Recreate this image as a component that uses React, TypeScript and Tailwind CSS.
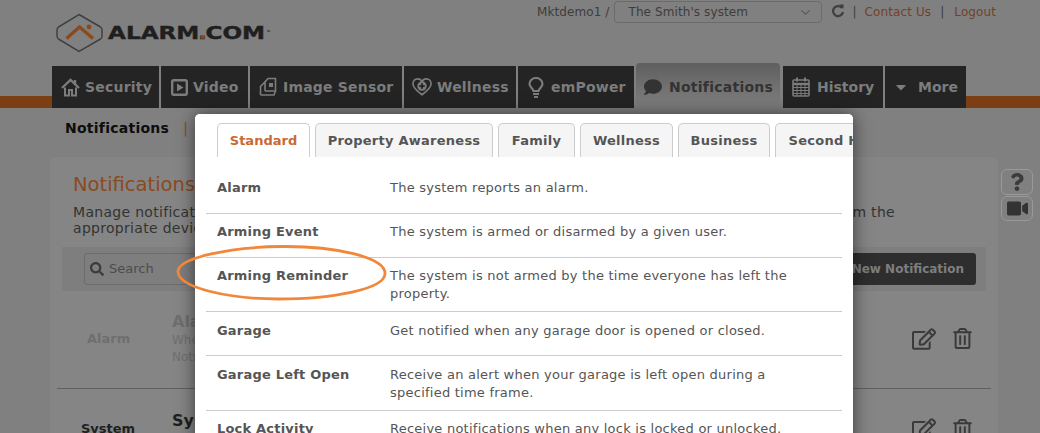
import React from 'react';
import {
  FaCaretDown,
  FaComment,
  FaQuestion,
  FaRegEdit,
  FaRegTrashAlt,
  FaSearch,
  FaVideo,
} from 'react-icons/fa';
import { FiChevronDown } from 'react-icons/fi';

const font = 'font-["DejaVu_Sans",Verdana,sans-serif]';

function Logo() {
  return (
    <div className="flex items-center pl-[56px] pt-[13px]">
      <svg width="48" height="40" viewBox="0 0 48 40" fill="none">
        <path d="M23 1.5 L44.5 14 Q46 15 46 17 L46 23 Q46 25 44.5 26 L23 38.5 L2.5 26 Q1 25 1 23 L1 17 Q1 15 2.5 14 Z" stroke="#404040" strokeWidth="1.5" />
        <path d="M10.5 25.5 L23.5 14 L37 25.5" stroke="#8a4a1c" strokeWidth="3.4" />
        <circle cx="33" cy="14" r="2.4" fill="#8a4a1c" />
      </svg>
      <span className="ml-[4px] origin-left scale-x-[1.36] text-[17px] leading-none font-bold text-[#1f1f1f] [-webkit-text-stroke:0.4px_#1f1f1f]">
        ALARM<span className="-mx-[1px] text-[#8a4a1c]">.</span>COM
        <span className="relative -top-[7px] ml-[1px] text-[3px] [-webkit-text-stroke:0px]">®</span>
      </span>
    </div>
  );
}

function UserBar() {
  return (
    <div className="flex h-[24px] items-center pr-[44px] text-[12px] tracking-[0.1px] text-[#3d3d3d]">
      <span>Mktdemo1 /</span>
      <div className="ml-[5px] flex h-[22px] w-[208px] items-center justify-between rounded-[4px] border border-[#6b6b6b] pl-[13px] pr-[8px]">
        <span>The Smith's system</span>
        <FiChevronDown size={15} className="text-[#5a5a5a]" />
      </div>
      <svg width="14" height="18" viewBox="0 0 14 18" fill="none" className="ml-[9px]">
        <path d="M11 5 A5 5 0 1 0 12 9" stroke="#3f3f3f" strokeWidth="2.2" />
        <path d="M8 1.5 L12.5 1.5 L12.5 6 Z" fill="#3f3f3f" />
      </svg>
      <span className="ml-[7px]">|</span>
      <span className="ml-[8px] text-[#74402a]">Contact Us</span>
      <span className="ml-[9px]">|</span>
      <span className="ml-[10px] text-[#74402a]">Logout</span>
    </div>
  );
}

function HomeIcon() {
  return (
    <svg width="19" height="19" viewBox="0 0 19 19" fill="none" stroke="#7c7c7c">
      <path d="M1 10 L9.5 2 L18 10" strokeWidth="2.4" />
      <path d="M14 2 L14 6" strokeWidth="2.4" />
      <path d="M4 9.5 L4 17.5 L8 17.5 L8 12 L11 12 L11 17.5 L15 17.5 L15 9.5" strokeWidth="2" />
    </svg>
  );
}

function PlayIcon() {
  return (
    <svg width="17" height="17" viewBox="0 0 17 17" fill="none">
      <rect x="1.2" y="1.2" width="14.6" height="14.6" rx="1.5" stroke="#7c7c7c" strokeWidth="2.4" />
      <path d="M6 4.5 L12.5 8.5 L6 12.5 Z" fill="#7c7c7c" />
    </svg>
  );
}

function SensorIcon() {
  return (
    <svg width="18" height="20" viewBox="0 0 18 20" fill="none" stroke="#7c7c7c" strokeWidth="1.6">
      <path d="M1.5 18 L1.5 9.5 L6 5 L6 14" />
      <path d="M6 5 L9 1.5 L16.5 1.5 L16.5 14 L6 14" />
      <path d="M1.5 18 L15 18 L16.5 14" />
      <rect x="10" y="6" width="4" height="4" fill="#7c7c7c" stroke="none" />
    </svg>
  );
}

function HeartIcon() {
  return (
    <svg width="22" height="20" viewBox="0 0 22 20" fill="none">
      <path d="M11 18.5 C4 13.5 1 10.5 1 6.5 C1 3.2 3.4 1 6.2 1 C8.2 1 10 2 11 4 C12 2 13.8 1 15.8 1 C18.6 1 21 3.2 21 6.5 C21 10.5 18 13.5 11 18.5 Z" stroke="#7c7c7c" strokeWidth="1.8" />
      <circle cx="11" cy="9" r="5.2" fill="#7c7c7c" />
      <path d="M11 6 L11 12 M8 9 L14 9" stroke="#242424" strokeWidth="2" />
    </svg>
  );
}

function BulbIcon() {
  return (
    <svg width="16" height="21" viewBox="0 0 16 21" fill="none" stroke="#7c7c7c">
      <path d="M5.5 14 C5 11 1.5 10 1.5 7 A6.5 6 0 0 1 14.5 7 C14.5 10 11 11 10.5 14 Z" strokeWidth="2.2" />
      <path d="M5 17 L11 17 M6 20 L10 20" strokeWidth="2" />
    </svg>
  );
}

function CalendarIcon() {
  return (
    <svg width="18" height="20" viewBox="0 0 18 20" fill="none" stroke="#7c7c7c">
      <rect x="1" y="3" width="16" height="16" rx="1" strokeWidth="1.6" />
      <path d="M1 7 L17 7" strokeWidth="2.4" />
      <path d="M1 10.5 L17 10.5 M1 13.5 L17 13.5 M1 16.5 L17 16.5 M5 8 L5 19 M9 8 L9 19 M13 8 L13 19" strokeWidth="1" />
      <path d="M5 0.5 L5 4.5 M13 0.5 L13 4.5" strokeWidth="2" />
    </svg>
  );
}

const navItems = [
  { label: 'Security', width: 'w-[107px]', icon: <HomeIcon />, gap: 'gap-[5px]' },
  { label: 'Video', width: 'w-[87px]', icon: <PlayIcon />, gap: 'gap-[4px]' },
  { label: 'Image Sensor', width: 'w-[152px]', icon: <SensorIcon />, gap: 'gap-[5px]' },
  { label: 'Wellness', width: 'w-[112px]', icon: <HeartIcon />, gap: 'gap-[5px]' },
  { label: 'emPower', width: 'w-[116px]', icon: <BulbIcon />, gap: 'gap-[5px]' },
];

function Nav() {
  return (
    <div className="flex h-[45px] items-end">
      <div className="h-[12px] w-[52px] self-end bg-[#7c3f14]" />
      <div className="flex items-end gap-[2px]">
        {navItems.map((item) => (
          <div key={item.label} className={`flex h-[42px] ${item.width} items-center ${item.gap} bg-[#242424] pl-[8px] text-[14px] font-bold tracking-[0.2px] text-[#7c7c7c]`}>
            <span className="flex w-[20px] shrink-0 justify-center">{item.icon}</span>
            <span>{item.label}</span>
          </div>
        ))}
        <div className="flex h-[45px] w-[144px] items-center gap-[7px] rounded-t-[4px] bg-gradient-to-b from-[#5f5f5f] to-[#808080] pl-[8px] pt-[3px] text-[14px] font-bold tracking-[0.25px] text-[#333333]">
          <FaComment size={18} />
          <span>Notifications</span>
        </div>
        <div className="ml-[1px] flex h-[42px] w-[100px] items-center gap-[7px] bg-[#242424] pl-[9px] text-[14px] font-bold text-[#7c7c7c]">
          <CalendarIcon />
          <span>History</span>
        </div>
        <div className="flex h-[42px] w-[81px] items-center gap-[9px] bg-[#242424] pl-[8px] text-[14px] font-bold text-[#7c7c7c]">
          <FaCaretDown size={16} />
          <span>More</span>
        </div>
      </div>
      <div className="h-[12px] flex-1 self-end bg-[#7c3f14]" />
    </div>
  );
}

function RowActions() {
  return (
    <div className="flex items-center gap-[16px] text-[#3a3a3a]">
      <FaRegEdit size={24} />
      <FaRegTrashAlt size={21} />
    </div>
  );
}

function Card() {
  return (
    <div className="flex items-start gap-[3px] pl-[50px] pt-[20px]">
      <div className="h-[300px] w-[948px] rounded-t-[6px] bg-[#858585] px-[7px]">
        <div className="pl-[16px] pt-[15px] text-[#8a4a22]">
          <div className="text-[19.5px] leading-[26px]">Notifications</div>
        </div>
        <div className="pl-[16px] pt-[6px] text-[14px] leading-[16px] tracking-[0.3px] text-[#333333]">
          <div className="flex w-[822px] justify-between">
            <span>Manage notifications for your system</span>
            <span>from the</span>
          </div>
          <div>appropriate devices.</div>
        </div>
        <div className="mx-[5px] mt-[11px] flex h-[44px] items-center justify-between bg-[#7e7e7e] pl-[22px] pr-[10px]">
          <div className="flex h-[32px] w-[200px] items-center gap-[5px] rounded-[3px] border border-[#6b6b6b] pl-[5px] text-[13px] text-[#4d4d4d]">
            <FaSearch size={14} className="text-[#3c3c3c]" />
            <span>Search</span>
          </div>
          <div className="flex h-[32px] items-center rounded-[3px] bg-[#2e2e2e] px-[12px] text-[12px] font-bold text-[#7e7e7e]">
            Add New Notification
          </div>
        </div>
        <div className="flex h-[98px] items-center border-b border-[#5f5f5f] pb-[2px] pl-[30px] pr-[18px]">
          <span className="w-[85px] text-[13px] font-bold text-[#6f6f6f]">Alarm</span>
          <div className="flex-1 text-[#6f6f6f]">
            <div className="text-[16px] font-bold leading-[20px]">Alarm</div>
            <div className="text-[12px] leading-[17px]">When an alarm occurs</div>
            <div className="text-[12px] leading-[17px]">Notify everyone</div>
          </div>
          <RowActions />
        </div>
        <div className="flex pl-[24px] pr-[18px] pt-[20px]">
          <span className="mt-[10px] w-[91px] text-[13px] font-bold text-[#1f1f1f]">System</span>
          <div className="flex-1 text-[16px] font-bold text-[#1f1f1f]">System</div>
          <div className="mt-[8px]"><RowActions /></div>
        </div>
      </div>
      <div className="mt-[12px] flex flex-col gap-[1px]">
        <div className="flex h-[26px] w-[32px] items-center justify-center rounded-[6px] border border-[#999999]">
          <FaQuestion size={18} className="text-[#3c3c3c]" />
        </div>
        <div className="flex h-[25px] w-[32px] items-center justify-center rounded-[6px] border border-[#999999]">
          <FaVideo size={21} className="text-[#333333]" />
        </div>
      </div>
    </div>
  );
}

const modalTabs = [
  { label: 'Property Awareness', width: 'w-[178px]' },
  { label: 'Family', width: 'w-[77px]' },
  { label: 'Wellness', width: 'w-[93px]' },
  { label: 'Business', width: 'w-[92px]' },
  { label: 'Second Home', width: 'w-[130px]' },
];

const rows = [
  { label: 'Alarm', text: 'The system reports an alarm.', pad: 'pt-[9px] pb-[8px]' },
  { label: 'Arming Event', text: 'The system is armed or disarmed by a given user.', pad: 'pt-[9px] pb-[8px]' },
  { label: 'Arming Reminder', text: 'The system is not armed by the time everyone has left the property.', pad: 'pt-[9px] pb-[8px]' },
  { label: 'Garage', text: 'Get notified when any garage door is opened or closed.', pad: 'pt-[10px] pb-[7px]' },
  { label: 'Garage Left Open', text: 'Receive an alert when your garage is left open during a specified time frame.', pad: 'pt-[10px] pb-[8px]' },
  { label: 'Lock Activity', text: 'Receive notifications when any lock is locked or unlocked.', pad: 'pt-[9px] pb-[8px]' },
];

function Modal() {
  return (
    <div className="absolute left-[195px] top-[114px] h-[340px] w-[658px] overflow-hidden rounded-[5px] bg-white shadow-[0_0_18px_rgba(0,0,0,0.55)]">
      <div className="flex h-[43px] items-end gap-[5px] overflow-hidden bg-white pl-[22px]">
        <div className="flex h-[34px] w-[93px] shrink-0 items-center justify-center rounded-t-[5px] border border-b-0 border-[#cccccc] bg-white text-[13px] font-bold text-[#c96a32]">
          Standard
        </div>
        {modalTabs.map((tab) => (
          <div key={tab.label} className={`flex h-[34px] ${tab.width} shrink-0 items-center justify-center whitespace-nowrap rounded-t-[5px] border border-b-0 border-[#cccccc] bg-[#f5f5f5] text-[13px] font-bold tracking-[0.25px] text-[#555555]`}>
            {tab.label}
          </div>
        ))}
      </div>
      <div className="mx-[11px] mt-[13px]">
        {rows.map((row) => (
          <div key={row.label} className={`flex min-h-[44px] border-b border-[#cccccc] ${row.pad} pl-[11px] text-[13px] leading-[18px] text-[#555555]`}>
            <span className="w-[173px] shrink-0 font-bold tracking-[0.2px]">{row.label}</span>
            <span className="w-[410px] tracking-[0.24px]">{row.text}</span>
          </div>
        ))}
      </div>
    </div>
  );
}

export default function App() {
  return (
    <div className={`relative h-[433px] w-[1040px] overflow-hidden bg-[#808080] ${font}`}>
      <div className="flex h-[63px] items-start justify-between">
        <Logo />
        <UserBar />
      </div>
      <Nav />
      <div className="flex items-center pl-[65px] pt-[11px] text-[14px] font-bold leading-[18px] tracking-[0.25px] text-[#0d0d0d]">
        Notifications
        <span className="ml-[14px] font-normal text-[#8a4a22]">|</span>
      </div>
      <Card />
      <Modal />
      {/* hand drawn ring around the reminder row */}
      <svg className="absolute left-[174px] top-[243px]" width="216" height="60" viewBox="0 0 216 60" fill="none">
        <path d="M108 3.5 C160 3 212 14 211 31 C210 46 160 56 104 56 C56 56 5 45 4 29 C3 15 56 4 108 3.5 Z" stroke="#f0873a" strokeWidth="2.8" />
      </svg>
    </div>
  );
}
